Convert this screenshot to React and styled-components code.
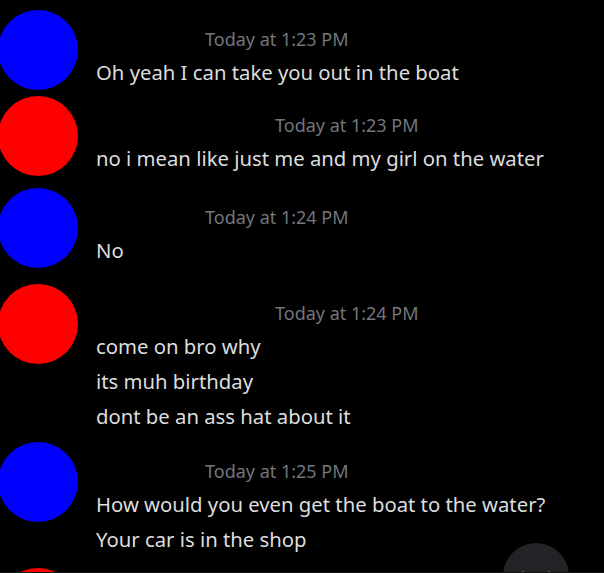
import React from 'react'
import styled, { createGlobalStyle } from 'styled-components'

const Global = createGlobalStyle`
  html, body {
    margin: 0;
    padding: 0;
    background: #000;
    overflow: hidden;
  }
  body {
    font-family: "Noto Sans", "Open Sans", sans-serif;
  }
`

const Screen = styled.div`
  position: relative;
  width: 604px;
  height: 573px;
  overflow: hidden;
  background: #000;
  padding-top: 10px;
  box-sizing: border-box;
`

const Group = styled.div`
  display: flex;
  gap: 18px;
  margin-bottom: ${({ $after }) => $after}px;
`

const Avatar = styled.div`
  flex: 0 0 80px;
  width: 80px;
  height: 80px;
  margin-left: -2px;
  border-radius: 50%;
  background: ${({ $color }) => $color};
`

const Content = styled.div`
  display: flex;
  flex-direction: column;
  padding-top: 15px;
  min-height: 65px;
`

const Header = styled.div`
  display: flex;
  align-items: baseline;
  height: 30px;
  line-height: 28px;
`

const Name = styled.span`
  display: inline-block;
  width: ${({ $w }) => $w}px;
  color: #000;
  font-size: 18px;
`

const Time = styled.span`
  color: #72767d;
  font-size: 18px;
`

const Line = styled.div`
  color: #dcddde;
  font-size: 20.3px;
  line-height: 35px;
  white-space: nowrap;
`

const Fab = styled.div`
  position: absolute;
  left: 503px;
  top: 543px;
  width: 66px;
  height: 66px;
  border-radius: 50%;
  background: #222326;
  display: flex;
  justify-content: center;
`

const BottomEdge = styled.div`
  position: absolute;
  left: 0;
  right: 0;
  bottom: 0;
  height: 1px;
  background: #141415;
`

const messages = [
  { color: '#0000ff', name: 109, time: 'Today at 1:23 PM', after: 6, lines: ['Oh yeah I can take you out in the boat'] },
  { color: '#ff0000', name: 179, time: 'Today at 1:23 PM', after: 12, lines: ['no i mean like just me and my girl on the water'] },
  { color: '#0000ff', name: 109, time: 'Today at 1:24 PM', after: 16, lines: ['No'] },
  { color: '#ff0000', name: 179, time: 'Today at 1:24 PM', after: 8, lines: ['come on bro why', 'its muh birthday', 'dont be an ass hat about it'] },
  { color: '#0000ff', name: 109, time: 'Today at 1:25 PM', after: 11, lines: ['How would you even get the boat to the water?', 'Your car is in the shop'] },
  { color: '#ff0000', name: 179, time: '', after: 0, lines: [] },
]

export default function App() {
  return (
    <>
      <Global />
      <Screen>
        {messages.map((m, i) => (
          <Group key={i} $after={m.after}>
            <Avatar $color={m.color} />
            <Content>
              <Header>
                <Name $w={m.name} />
                <Time>{m.time}</Time>
              </Header>
              {m.lines.map((l, j) => (
                <Line key={j}>{l}</Line>
              ))}
            </Content>
          </Group>
        ))}
        <Fab>
          <svg width="34" height="34" viewBox="0 0 34 34" style={{ marginTop: 27 }}>
            <path d="M4 3 L17 14 L30 3" stroke="#e8e8e8" strokeWidth="3" fill="none" strokeLinecap="round" />
          </svg>
        </Fab>
        <BottomEdge />
      </Screen>
    </>
  )
}
